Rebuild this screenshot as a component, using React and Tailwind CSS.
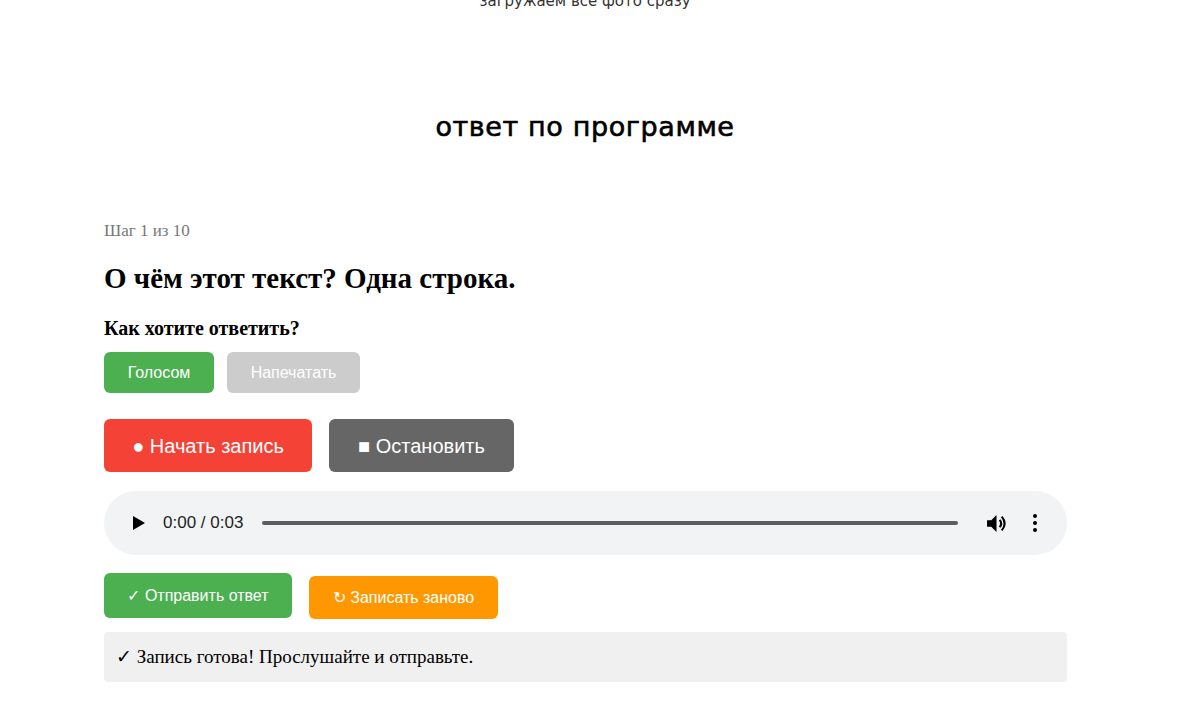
import React from "react";

const AudioBar = () => {
	return (
		<div className="flex items-center h-[64px] w-full rounded-full bg-[#f1f3f4] pl-[28px] pr-[30px]">
			<svg width="14" height="16" viewBox="0 0 14 16" className="shrink-0">
				<path d="M1 1 L13 8 L1 15 Z" fill="#000" />
			</svg>
			<span className="ml-[17px] text-[17px] text-[#1f1f1f] [font-family:'Liberation_Sans',Arial,sans-serif]">
				0:00 / 0:03
			</span>
			<div className="ml-[19px] flex-1 h-[4px] rounded-full bg-[#5e5e5e]" />
			<div className="ml-[28px] flex items-center">
				<svg width="21" height="19" viewBox="0 0 20 18">
					<path d="M1 6 H5 L10 1 V17 L5 12 H1 Z" fill="#000" />
					<path d="M13 5.5 Q16 9 13 12.5" stroke="#000" strokeWidth="2" fill="none" />
					<path d="M15 2.5 Q20.5 9 15 15.5" stroke="#000" strokeWidth="2" fill="none" />
				</svg>
			</div>
			<div className="ml-[26px] flex flex-col gap-[3px] items-center">
				<span className="block w-[4px] h-[4px] rounded-full bg-black" />
				<span className="block w-[4px] h-[4px] rounded-full bg-black" />
				<span className="block w-[4px] h-[4px] rounded-full bg-black" />
			</div>
		</div>
	);
};

const App = () => {
	return (
		<div className="min-h-[701px] bg-white overflow-hidden">
			{/* header fragment */}
			<div className="flex justify-center mt-[-10px] pr-[30px]">
				<span className="text-[15px] leading-[22px] text-[#333] [font-family:'DejaVu_Sans',sans-serif]">
					загружаем все фото сразу
				</span>
			</div>

			<h2 className="mt-[95px] text-center pr-[30px] text-[27px] leading-[40px] text-black tracking-[0.6px] [font-family:'DejaVu_Sans',sans-serif] [-webkit-text-stroke:0.6px_#000]">
				ответ по программе
			</h2>

			<div className="ml-[104px] w-[963px] mt-[73px] [font-family:'Liberation_Serif','Times_New_Roman',serif]">
				<div className="text-[17px] leading-[22px] text-[#777]">Шаг 1 из 10</div>
				<h3 className="mt-[19px] text-[29px] leading-[34px] font-bold text-black">
					О чём этот текст? Одна строка.
				</h3>
				<div className="mt-[21px] text-[20px] leading-[24px] font-bold text-black">
					Как хотите ответить?
				</div>

				<div className="mt-[12px] flex gap-[13px] [font-family:'Liberation_Sans',Arial,sans-serif]">
					<button className="h-[41px] w-[110px] rounded-[6px] bg-[#4caf50] text-white text-[16px]">
						Голосом
					</button>
					<button className="h-[41px] w-[133px] rounded-[6px] bg-[#cccccc] text-white text-[16px]">
						Напечатать
					</button>
				</div>

				<div className="mt-[26px] flex gap-[17px] [font-family:'Liberation_Sans',Arial,sans-serif]">
					<button className="h-[53px] w-[208px] rounded-[6px] bg-[#f44336] text-white text-[20px]">
						● Начать запись
					</button>
					<button className="h-[53px] w-[185px] rounded-[6px] bg-[#666666] text-white text-[20px]">
						■ Остановить
					</button>
				</div>

				<div className="mt-[19px]">
					<AudioBar />
				</div>

				<div className="mt-[18px] flex items-start gap-[17px] [font-family:'Liberation_Sans',Arial,sans-serif]">
					<button className="h-[45px] w-[188px] rounded-[6px] bg-[#4caf50] text-white text-[16px]">
						✓ Отправить ответ
					</button>
					<button className="mt-[3px] h-[43px] w-[189px] rounded-[6px] bg-[#ff9800] text-white text-[16px]">
						↻ Записать заново
					</button>
				</div>

				<div className="mt-[13px] h-[50px] flex items-center px-[12px] rounded-[4px] bg-[#f0f0f0] text-[19px] text-black">
					✓ Запись готова! Прослушайте и отправьте.
				</div>
			</div>
		</div>
	);
};

export default App;
